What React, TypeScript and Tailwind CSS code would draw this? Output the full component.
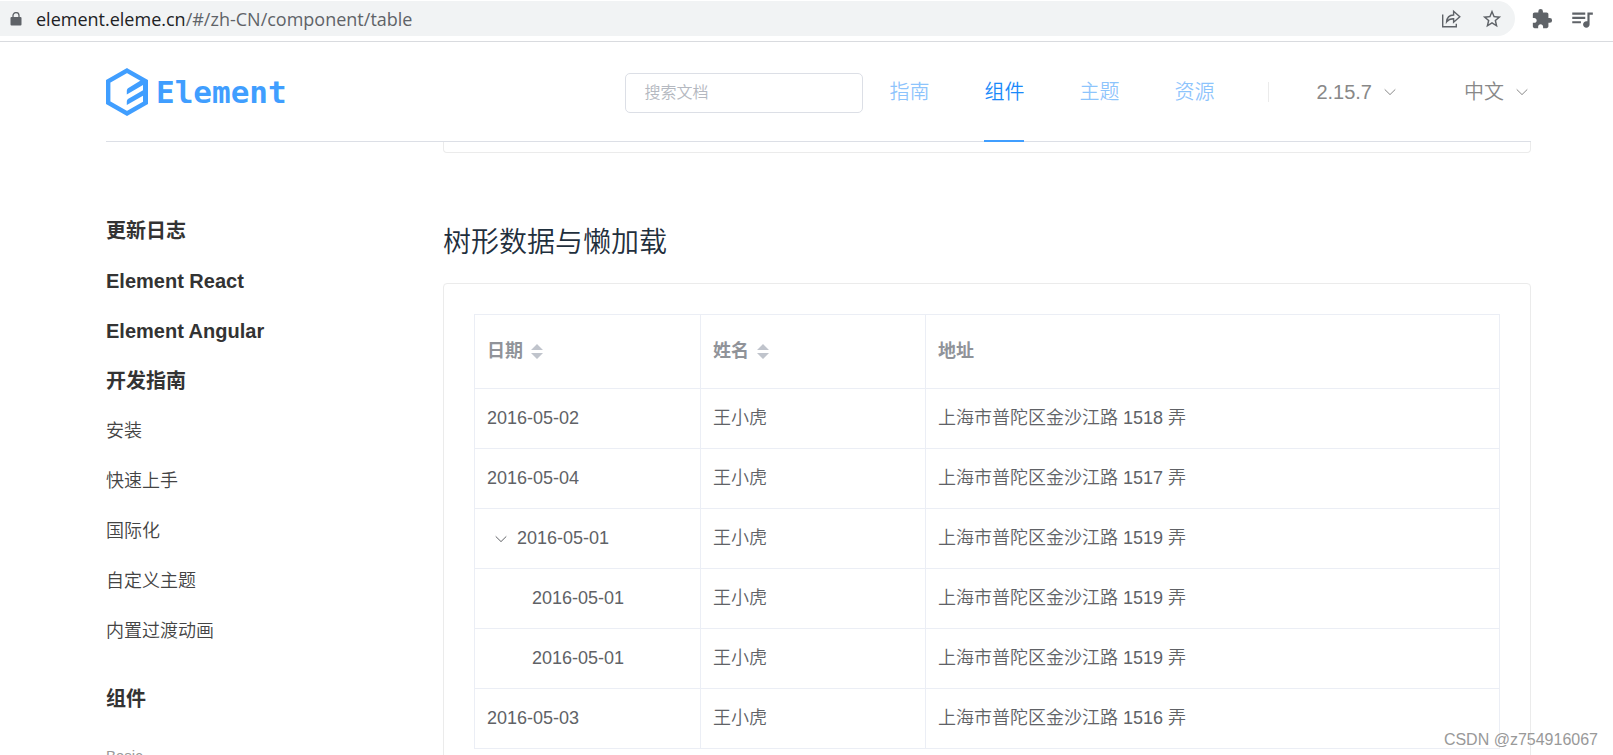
import { useState } from "react";
import { MdExtension, MdQueueMusic, MdStarBorder } from "react-icons/md";

const navItems = ["指南", "组件", "主题", "资源"];

const sideLinks = [
  { label: "更新日志", strong: true },
  { label: "Element React", strong: true },
  { label: "Element Angular", strong: true },
  { label: "开发指南", strong: true },
  { label: "安装", strong: false },
  { label: "快速上手", strong: false },
  { label: "国际化", strong: false },
  { label: "自定义主题", strong: false },
  { label: "内置过渡动画", strong: false },
];

const rows = [
  { id: 1, date: "2016-05-02", address: "上海市普陀区金沙江路 1518 弄", kind: "leaf" },
  { id: 2, date: "2016-05-04", address: "上海市普陀区金沙江路 1517 弄", kind: "leaf" },
  { id: 3, date: "2016-05-01", address: "上海市普陀区金沙江路 1519 弄", kind: "parent" },
  { id: 31, date: "2016-05-01", address: "上海市普陀区金沙江路 1519 弄", kind: "child" },
  { id: 32, date: "2016-05-01", address: "上海市普陀区金沙江路 1519 弄", kind: "child" },
  { id: 4, date: "2016-05-03", address: "上海市普陀区金沙江路 1516 弄", kind: "leaf" },
];

const Chevron = ({ className }: { className?: string }) => (
  <svg viewBox="0 0 12 12" className={className} fill="none" stroke="currentColor" aria-hidden="true">
    <path d="M0.7 3.4 6 8.6l5.3-5.2" />
  </svg>
);

const SortCaret = () => (
  <svg viewBox="0 0 12 16" className="h-4 w-3 fill-[#c0c4cc]" aria-hidden="true">
    <path d="M6 0 12 6H0zM0 9h12l-6 6z" />
  </svg>
);

const AddressBar = () => (
  <div className="flex h-[42px] items-start border-b border-[#d9dbdf] pt-px">
    <div className="flex h-[35px] flex-1 items-center rounded-r-full bg-[#f1f3f4] pl-[10px] pr-3 text-[#5f6368]">
      <svg viewBox="0 0 12 14" className="h-[14px] w-3" aria-hidden="true">
        <rect x="0.5" y="5" width="11" height="8.5" rx="1" fill="currentColor" />
        <path d="M3 5.5V3.6a3 3 0 0 1 6 0v1.9" fill="none" stroke="currentColor" strokeWidth="1.3" />
      </svg>
      <span className="ml-[14px] flex-1 font-['Open_Sans',sans-serif] text-[18px] leading-6">
        <span className="text-[#202124]">element.eleme.cn</span>/#/zh-CN/component/table
      </span>
      <button type="button" aria-label="Share" className="mr-5">
        <svg viewBox="0 0 20 20" className="size-5" fill="none" stroke="currentColor" strokeWidth="1.4">
          <path d="M1.7 5.5v12.3h13.6v-3" />
          <path d="M5.6 12.9C5.9 8.4 8.5 6.2 12.6 6V2.3l6.2 5.5-6.2 5.4V9.8c-3-.1-5.3.9-7 3.1z" />
        </svg>
      </button>
      <button type="button" aria-label="Bookmark">
        <MdStarBorder className="size-[22px]" />
      </button>
    </div>
    <div className="flex h-[35px] items-center gap-4 pl-4 pr-[18px] text-[#5f6368]">
      <button type="button" aria-label="Extensions">
        <MdExtension className="size-[22px]" />
      </button>
      <button type="button" aria-label="Media">
        <MdQueueMusic className="size-[26px]" />
      </button>
    </div>
  </div>
);

const Logo = () => (
  <a href="#" className="flex items-center gap-2 text-[#409eff]">
    <svg viewBox="0 0 42 48" className="h-12 w-[42px]" aria-hidden="true">
      <path
        d="M21 2.6 39.8 13.3v21.4L21 45.4 2.2 34.7V13.3z"
        fill="none"
        stroke="currentColor"
        strokeWidth="4.4"
      />
      <path
        fill="currentColor"
        d="M37 11 40 14v20l-3 1v-7.2L20.8 37v-3.2c0-1.6.8-2.6 2-3.3L37 22.3v-5.2L20.8 26.4V23c0-1.6.8-2.6 2-3.3z"
      />
    </svg>
    <span className="font-['DejaVu_Sans_Mono',monospace] text-[31px] font-bold leading-10">Element</span>
  </a>
);

const Header = () => (
  <header className="ml-[106px] mr-[82px] flex h-[100px] items-center border-b border-[#dcdfe6]">
    <Logo />
    <input
      type="text"
      aria-label="搜索文档"
      placeholder="搜索文档"
      className="ml-auto mr-[26px] mt-[2px] h-10 w-[238px] rounded-[5px] border border-[#dcdfe6] px-[18px] text-[16px] font-[350] outline-none placeholder:text-[#b4b8c0]"
    />
    <nav className="flex gap-[55px] self-stretch text-[20px] font-[350]">
      {navItems.map((item) => (
        <a
          key={item}
          href="#"
          className={
            item === "组件"
              ? "-mb-px flex items-center border-b-2 border-[#409eff] pt-[2px] text-[#1989fa]"
              : "-mb-px flex items-center border-b-2 border-transparent pt-[2px] text-[#1989fa]/50"
          }
        >
          {item}
        </a>
      ))}
    </nav>
    <span className="ml-[54px] h-5 w-px bg-[#ebebeb]" />
    <div className="ml-[47px] flex items-center gap-3 text-[#888]">
      <select aria-label="版本" className="appearance-none text-[20px] [field-sizing:content]">
        <option>2.15.7</option>
      </select>
      <Chevron className="size-3" />
    </div>
    <div className="ml-[68px] mr-[3px] flex items-center gap-3 text-[#888]">
      <select aria-label="语言" className="appearance-none text-[20px] font-[350] [field-sizing:content]">
        <option>中文</option>
      </select>
      <Chevron className="size-3" />
    </div>
  </header>
);

const Sidebar = () => (
  <aside className="w-[337px] shrink-0 pt-16 text-[#333]">
    <ul>
      {sideLinks.map((link) => (
        <li key={link.label} className="h-[50px]">
          <a
            href="#"
            className={
              link.strong
                ? "block text-[20px] font-bold leading-[50px]"
                : "block text-[18px] font-[350] leading-[50px] text-[#444]"
            }
          >
            {link.label}
          </a>
        </li>
      ))}
    </ul>
    <h2 className="mt-[18px] text-[20px] font-bold leading-[50px]">组件</h2>
    <p className="mt-4 text-[15px] leading-8 text-[#999]">Basic</p>
  </aside>
);

const TreeTable = () => {
  const [open, setOpen] = useState(true);
  const visible = rows.filter((row) => open || row.kind !== "child");

  return (
    <table className="w-full table-fixed border-separate border-spacing-0 border-l border-t border-[#ebeef5] text-left text-[18px]">
      <colgroup>
        <col className="w-[226px]" />
        <col className="w-[225px]" />
        <col />
      </colgroup>
      <thead>
        <tr className="h-[74px] text-[#909399]">
          {["日期", "姓名", "地址"].map((title) => (
            <th key={title} className="border-b border-r border-[#ebeef5] px-3 font-bold">
              <span className="flex items-center gap-2">
                {title}
                {title !== "地址" && (
                  <button type="button" aria-label={title}>
                    <SortCaret />
                  </button>
                )}
              </span>
            </th>
          ))}
        </tr>
      </thead>
      <tbody>
        {visible.map((row) => (
          <tr key={row.id} className="h-[60px] font-[350] text-[#606266]">
            <td className="border-b border-r border-[#ebeef5] px-3">
              <span className={row.kind === "child" ? "flex items-center pl-[45px]" : "flex items-center"}>
                {row.kind === "parent" && (
                  <button type="button" aria-label="展开" className="pl-2 pr-[10px]" onClick={() => setOpen(!open)}>
                    <Chevron className={open ? "size-3" : "size-3 -rotate-90"} />
                  </button>
                )}
                {row.date}
              </span>
            </td>
            <td className="border-b border-r border-[#ebeef5] px-3">王小虎</td>
            <td className="border-b border-r border-[#ebeef5] px-3">{row.address}</td>
          </tr>
        ))}
      </tbody>
    </table>
  );
};

const App = () => {
  return (
    <div className="relative h-screen overflow-hidden bg-white font-['Liberation_Sans','Noto_Sans_CJK_SC',sans-serif]">
      <AddressBar />
      <Header />

      <div className="ml-[106px] mr-[82px] flex">
        <Sidebar />
        <main className="min-w-0 flex-1">
          {/* Tail of the previous demo */}
          <div className="h-[11px] rounded-b-[4px] border-x border-b border-[#ebebeb]" />
          <h3 className="mb-[19px] mt-[69px] text-[28px] font-[350] leading-[42px] text-[#1f2f3d]">树形数据与懒加载</h3>
          <section className="rounded-[4px] border border-[#ebebeb] p-[30px]">
            <TreeTable />
          </section>
        </main>
      </div>

      <span className="absolute bottom-[3px] right-[15px] text-[16px] leading-6 text-[#999]">CSDN @z754916067</span>
    </div>
  );
};

export default App;
